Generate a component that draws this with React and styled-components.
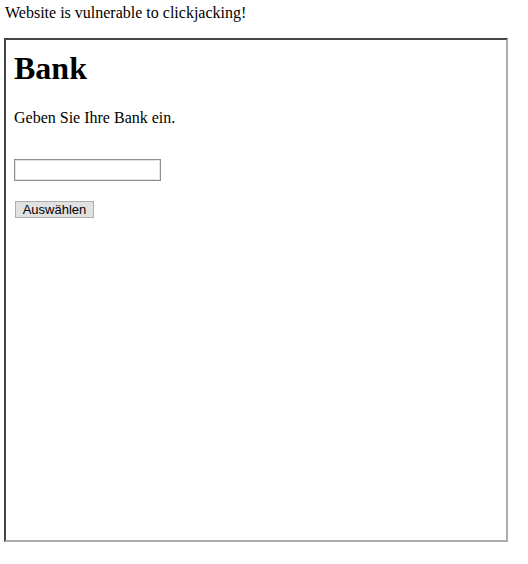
import React from "react";
import styled, { createGlobalStyle } from "styled-components";

const GlobalStyle = createGlobalStyle`
  body {
    margin: 0;
    padding: 4px;
    background: #fff;
    color: #000;
    font-family: "Liberation Serif", "Times New Roman", serif;
    font-size: 16px;
  }
`;

const Notice = styled.p`
  margin: 0 0 16px 1px;
  line-height: 18px;
`;

const Frame = styled.div`
  box-sizing: content-box;
  width: 484px;
  height: 484px;
  padding: 8px;
  border-style: solid;
  border-width: 2px;
  border-color: #454545 #ababab #ababab #454545;
  display: flex;
  flex-direction: column;
  align-items: flex-start;
`;

const Title = styled.h1`
  margin: 2px 0 22px;
  font-size: 32px;
  font-weight: bold;
  line-height: 37px;
`;

const Prompt = styled.p`
  margin: 0 0 32px;
  line-height: 18px;
`;

const BankForm = styled.form`
  display: flex;
  flex-direction: column;
  align-items: flex-start;
  gap: 20px;
`;

const TextInput = styled.input`
  box-sizing: border-box;
  width: 147px;
  height: 22px;
  margin: 0;
  padding: 1px 2px;
  border: 1px solid #8f8f8f;
  box-shadow: inset 0 0 0 1px #e3e3e3;
  background: #fff;
  font: 13px "Liberation Sans", Arial, sans-serif;
`;

const SelectButton = styled.button`
  box-sizing: border-box;
  width: 79px;
  height: 17px;
  margin: 0 0 0 1px;
  padding: 0 6px;
  border: 1px solid #adadad;
  background: #e1e1e1;
  color: #000;
  font: 13px/15px "Liberation Sans", Arial, sans-serif;
`;

export default function App() {
  return (
    <>
      <GlobalStyle />
      <Notice>Website is vulnerable to clickjacking!</Notice>
      <Frame>
        <Title>Bank</Title>
        <Prompt>Geben Sie Ihre Bank ein.</Prompt>
        <BankForm onSubmit={(e) => e.preventDefault()}>
          <TextInput type="text" />
          <SelectButton type="submit">Auswählen</SelectButton>
        </BankForm>
      </Frame>
    </>
  );
}
